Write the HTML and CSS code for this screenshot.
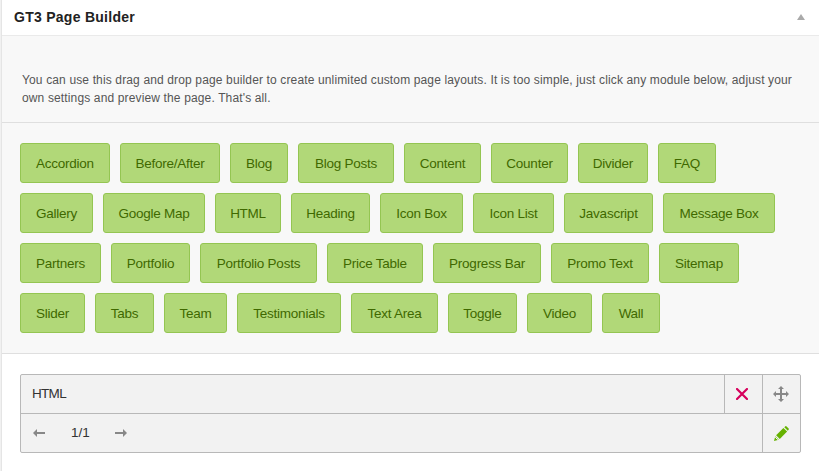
FILE: index.html
```html
<!DOCTYPE html>
<html lang="en">
<head>
<meta charset="utf-8">
<title>GT3 Page Builder</title>
<link rel="stylesheet" href="styles.css">
</head>
<body>
<section class="postbox">
  <header class="postbox-head">
    <h3>GT3 Page Builder</h3>
    <svg class="toggle" width="8" height="6" viewBox="0 0 8 6"><path d="M4 0 8 6H0z" fill="#aaa"/></svg>
  </header>
  <div class="intro"><p>You can use this drag and drop page builder to create unlimited custom page layouts. It is too simple, just click any module below, adjust your<br>own settings and preview the page. That's all.</p></div>
  <div class="modules">
    <div class="row"><a class="w90">Accordion</a><a class="w100">Before/After</a><a class="w58">Blog</a><a class="w96">Blog Posts</a><a class="w77">Content</a><a class="w77">Counter</a><a class="w70">Divider</a><a class="w58">FAQ</a></div>
    <div class="row"><a class="w73">Gallery</a><a class="w102">Google Map</a><a class="w66">HTML</a><a class="w79">Heading</a><a class="w83">Icon Box</a><a class="w81">Icon List</a><a class="w89">Javascript</a><a class="w112">Message Box</a></div>
    <div class="row"><a class="w81">Partners</a><a class="w79">Portfolio</a><a class="w117">Portfolio Posts</a><a class="w96">Price Table</a><a class="w108">Progress Bar</a><a class="w98">Promo Text</a><a class="w80">Sitemap</a></div>
    <div class="row"><a class="w65">Slider</a><a class="w59">Tabs</a><a class="w63">Team</a><a class="w104">Testimonials</a><a class="w87">Text Area</a><a class="w69">Toggle</a><a class="w65">Video</a><a class="w58">Wall</a></div>
  </div>
  <div class="canvas">
    <div class="block">
      <div class="block-row">
        <span class="name">HTML</span>
        <span class="cell"><svg width="12" height="12" viewBox="0 0 12 12"><path d="M1 1 11 11M11 1 1 11" stroke="#d6005c" stroke-width="2.2" stroke-linecap="round"/></svg></span>
        <span class="cell move"><svg width="16" height="16" viewBox="0 0 16 16"><path d="M8 2V14M2 8H14" stroke="#888" stroke-width="2"/><path d="M8 0 11 3H5zM8 16 11 13H5zM0 8 3 5V11zM16 8 13 5V11z" fill="#888"/></svg></span>
      </div>
      <div class="block-row">
        <span class="pager">
          <svg width="12" height="8" viewBox="0 0 12 8"><path d="M0 4 4 0V3H12V5H4V8z" fill="#888"/></svg>
          <span class="size">1/1</span>
          <svg width="12" height="8" viewBox="0 0 12 8"><path d="M12 4 8 0V3H0V5H8V8z" fill="#888"/></svg>
        </span>
        <span class="cell edit"><svg width="15" height="15" viewBox="0 0 15 15"><path d="M2.1 9.2 9.4 1.9 13.1 5.6 5.8 12.9z" fill="#66b200"/><path d="M10.3 1.2 11.4.3Q12-.1 12.6.4L14.6 2.4Q15.1 3 14.7 3.6L13.8 4.7z" fill="#66b200"/><path d="M1.3 10.3 4.7 13.7 0 15z" fill="#66b200"/><path d="M1.2 11.2 3.8 13.8" stroke="#f2f2f2" stroke-width="1"/></svg></span>
      </div>
    </div>
  </div>
</section>
</body>
</html>
```
FILE: styles.css
```css
* { box-sizing: border-box; }
body {
  margin: 0;
  background: #f1f1f1;
  font: 13px/18px "Liberation Sans", Arial, sans-serif;
}
.postbox {
  height: 471px;
  margin-left: 1px;
  border-left: 1px solid #e5e5e5;
  background: #fff;
  overflow: hidden;
}
.postbox-head {
  display: flex;
  align-items: center;
  justify-content: space-between;
  height: 36px;
  padding: 0 14px 1px 12px;
  border-bottom: 1px solid #eaeaea;
}
h3 {
  margin: 0;
  font-size: 14px;
  letter-spacing: 0.27px;
  color: #222;
}
.intro {
  height: 87px;
  padding: 35px 0 0 20px;
  border-bottom: 1px solid #dfdfdf;
  background: #f8f8f8;
}
.intro p {
  margin: 0;
  font-size: 12px;
  letter-spacing: 0.14px;
  color: #555;
  white-space: nowrap;
}
.modules {
  display: flex;
  flex-direction: column;
  gap: 10px;
  height: 231px;
  padding: 20px 18px;
  border-bottom: 1px solid #dfdfdf;
  background: #f8f8f8;
}
.row { display: flex; gap: 10px; }
.row a {
  flex: none;
  height: 40px;
  border: 1px solid #94c552;
  border-radius: 3px;
  background: #b1d878;
  color: #3f6900;
  font-size: 13.5px;
  letter-spacing: -0.25px;
  line-height: 39px;
  text-align: center;
  white-space: nowrap;
}
.w58 { width: 58px; }
.w59 { width: 59px; }
.w63 { width: 63px; }
.w65 { width: 65px; }
.w66 { width: 66px; }
.w69 { width: 69px; }
.w70 { width: 70px; }
.w73 { width: 73px; }
.w77 { width: 77px; }
.w79 { width: 79px; }
.w80 { width: 80px; }
.w81 { width: 81px; }
.w83 { width: 83px; }
.w87 { width: 87px; }
.w89 { width: 89px; }
.w90 { width: 90px; }
.w96 { width: 96px; }
.w98 { width: 98px; }
.w100 { width: 100px; }
.w102 { width: 102px; }
.w104 { width: 104px; }
.w108 { width: 108px; }
.w112 { width: 112px; }
.w117 { width: 117px; }
.canvas { padding: 20px 18px; }
.block {
  border: 1px solid #b8b8b8;
  border-radius: 2px;
  background: #f2f2f2;
  color: #333;
}
.block-row { display: flex; height: 38px; }
.block-row + .block-row { height: 39px; border-top: 1px solid #b8b8b8; }
.name {
  flex: 1;
  padding-left: 11px;
  font-size: 13.5px;
  letter-spacing: -0.7px;
  line-height: 37px;
}
.cell {
  display: flex;
  align-items: center;
  justify-content: center;
  width: 38px;
  padding-right: 3px;
  border-left: 1px solid #b8b8b8;
}
.move { padding-right: 1px; }
.edit { padding-right: 0; }
.pager {
  display: flex;
  flex: 1;
  align-items: center;
  padding: 0 0 1px 12px;
}
.size {
  width: 70px;
  padding-left: 1px;
  font-size: 13.5px;
  line-height: 20px;
  text-align: center;
}
```
